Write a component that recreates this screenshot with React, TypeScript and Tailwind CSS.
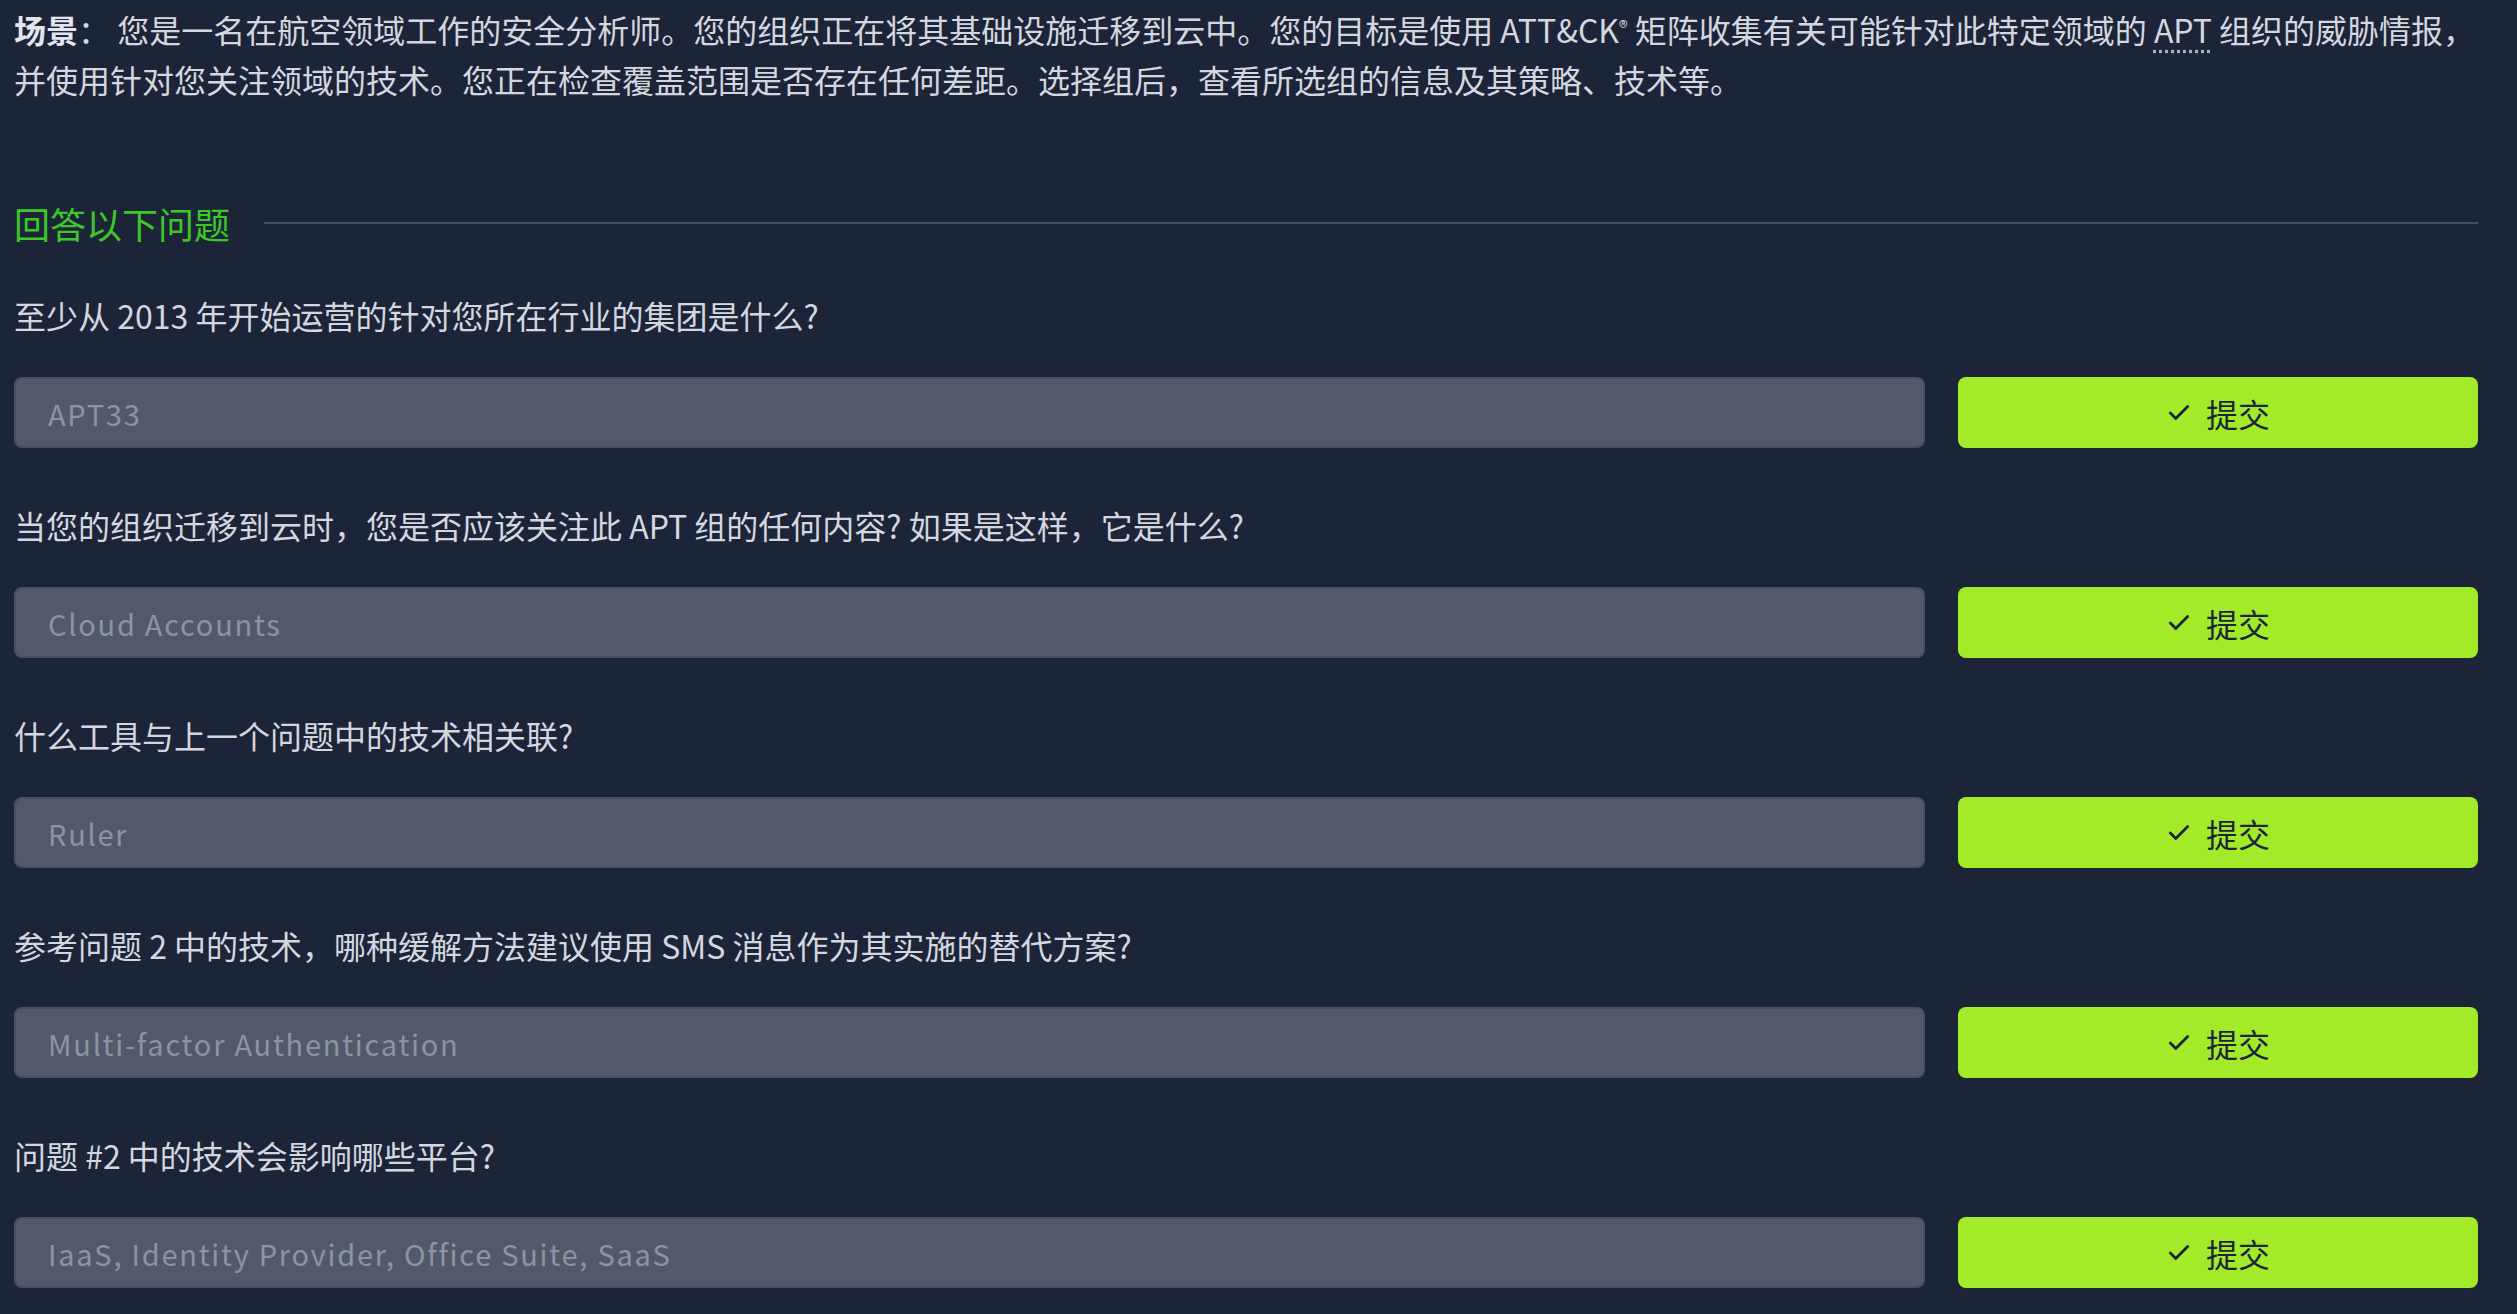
import { Check } from "lucide-react";

const questions = [
  { q: "至少从 2013 年开始运营的针对您所在行业的集团是什么?", a: "APT33" },
  { q: "当您的组织迁移到云时，您是否应该关注此 APT 组的任何内容? 如果是这样，它是什么?", a: "Cloud Accounts" },
  { q: "什么工具与上一个问题中的技术相关联?", a: "Ruler" },
  { q: "参考问题 2 中的技术，哪种缓解方法建议使用 SMS 消息作为其实施的替代方案?", a: "Multi-factor Authentication" },
  { q: "问题 #2 中的技术会影响哪些平台?", a: "IaaS, Identity Provider, Office Suite, SaaS" }
];

function QuestionRow({ q, a }: { q: string; a: string }) {
  return (
    <div>
      <p className="text-[32px] leading-[44px] text-[#d3d7df]">{q}</p>
      <div className="mt-[40px] flex h-[71px] items-stretch gap-[33px]">
        <input
          readOnly
          placeholder={a}
          className="h-full flex-1 rounded-[8px] border-2 border-[#474f60] bg-[#525a6a] px-[32px] text-[29px] tracking-[0.06em] text-[#8c94a3] placeholder:text-[#8c94a3] outline-none"
        />
        <button className="flex h-full w-[520px] items-center justify-center gap-[14px] rounded-[8px] bg-[#a3eb28] text-[32px] text-[#1c2538]">
          <Check className="h-[26px] w-[26px]" strokeWidth={2.6} />
          <span>提交</span>
        </button>
      </div>
    </div>
  );
}

export default function App() {
  return (
    <div className="min-h-screen bg-[#1c2538] font-['Noto_Sans_CJK_SC',sans-serif]">
      <div className="ml-[14px] w-[2464px] pt-[4px]">
        <p className="text-[32px] leading-[50px] text-[#d3d7df]">
          <strong className="font-bold text-[#e2e6ec]">场景</strong>： 您是一名在航空领域工作的安全分析师。您的组织正在将其基础设施迁移到云中。您的目标是使用 ATT&amp;CK
          <sup className="text-[18px]">®</sup> 矩阵收集有关可能针对此特定领域的{" "}
          <abbr title="Advanced Persistent Threat" className="underline-offset-[7px] decoration-[#a9b0bd]">
            APT
          </abbr>{" "}
          组织的威胁情报，并使用针对您关注领域的技术。您正在检查覆盖范围是否存在任何差距。选择组后，查看所选组的信息及其策略、技术等。
        </p>

        <div className="mt-[94px] flex items-center gap-[34px]">
          <h2 className="text-[36px] leading-[50px] text-[#3cc828]">回答以下问题</h2>
          <div className="h-[2px] flex-1 bg-[#434c5f]" />
        </div>

        <div className="mt-[45px] flex flex-col gap-[55px]">
          {questions.map((item) => (
            <QuestionRow key={item.q} q={item.q} a={item.a} />
          ))}
        </div>
      </div>
    </div>
  );
}
